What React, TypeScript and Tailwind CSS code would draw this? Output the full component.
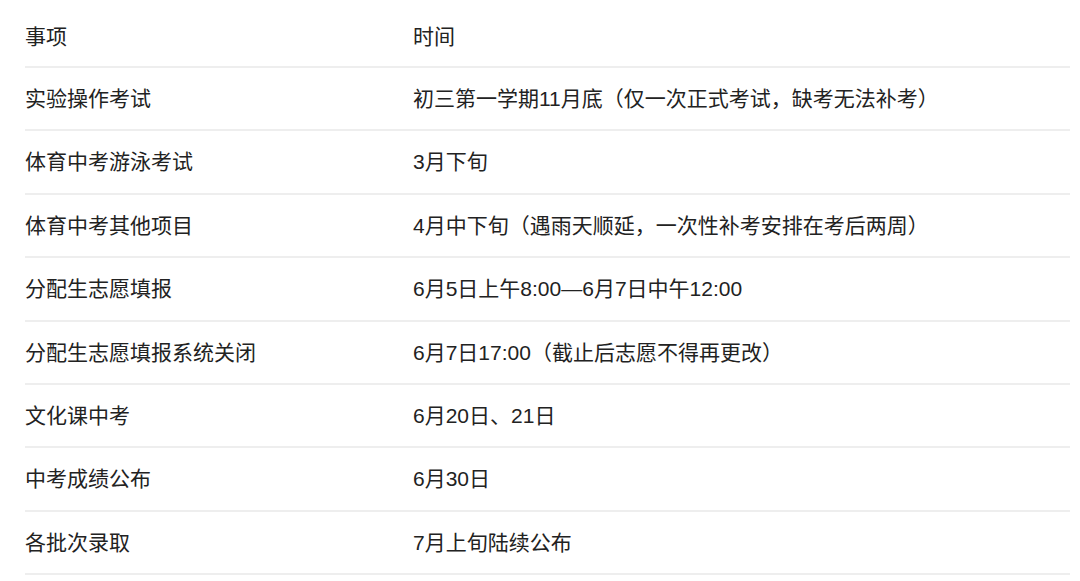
import React from "react";

const rows: [string, string][] = [
  ["实验操作考试", "初三第一学期11月底（仅一次正式考试，缺考无法补考）"],
  ["体育中考游泳考试", "3月下旬"],
  ["体育中考其他项目", "4月中下旬（遇雨天顺延，一次性补考安排在考后两周）"],
  ["分配生志愿填报", "6月5日上午8:00—6月7日中午12:00"],
  ["分配生志愿填报系统关闭", "6月7日17:00（截止后志愿不得再更改）"],
  ["文化课中考", "6月20日、21日"],
  ["中考成绩公布", "6月30日"],
  ["各批次录取", "7月上旬陆续公布"],
];

export default function App() {
  return (
    <div
      className="w-[1080px] h-[581px] bg-white overflow-hidden text-[#222222] text-[21px]"
      style={{ fontFamily: '"Liberation Sans", "Noto Sans CJK SC", sans-serif' }}
    >
      <div className="ml-[25px] w-[1045px] flex flex-col">
        <div className="h-[68px] pt-[7px] flex items-center border-b-2 border-[#eeeeee]">
          <div className="w-[388px]">事项</div>
          <div>时间</div>
        </div>
        {rows.map(([a, b]) => (
          <div
            key={a}
            className="h-[63.4px] flex items-center border-b-2 border-[#eeeeee]"
          >
            <div className="w-[388px]">{a}</div>
            <div>{b}</div>
          </div>
        ))}
      </div>
    </div>
  );
}
